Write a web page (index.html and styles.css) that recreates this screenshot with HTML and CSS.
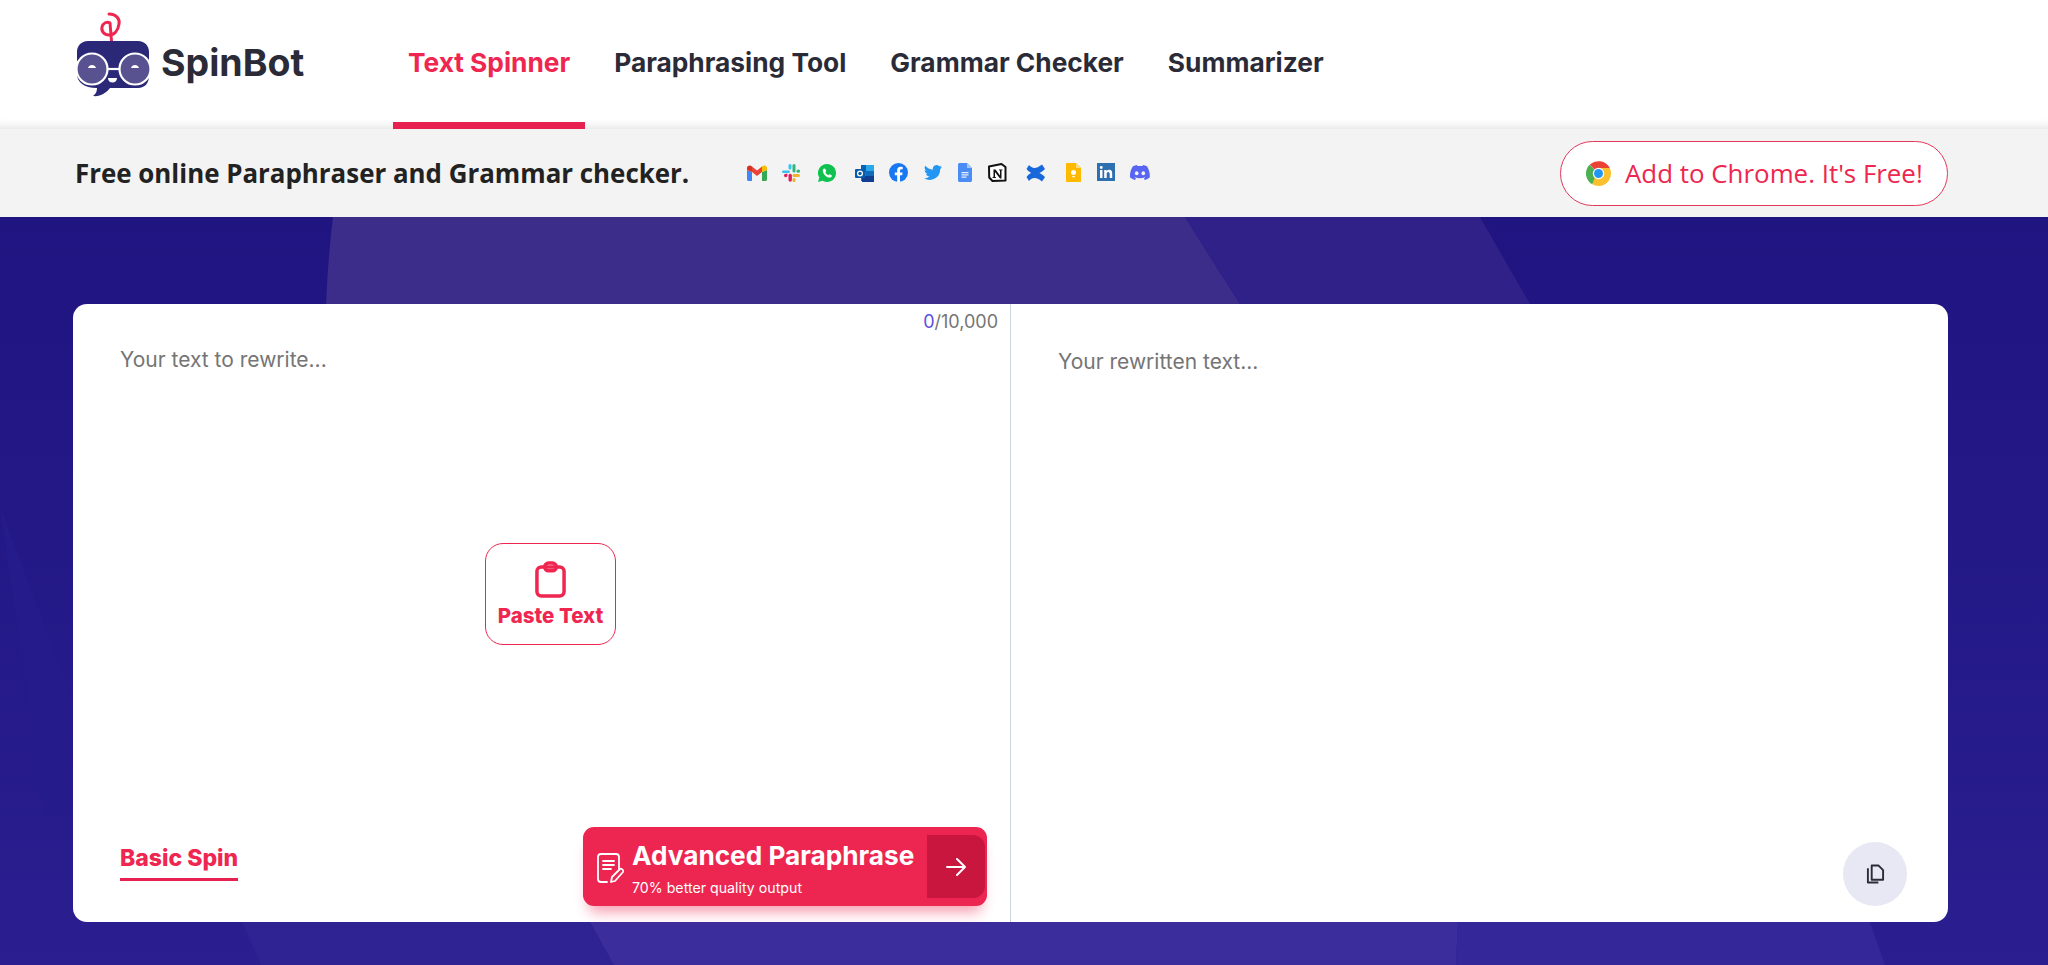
FILE: index.html
```html
<!DOCTYPE html>
<html lang="en">
<head>
    <meta charset="UTF-8">
    <meta name="viewport" content="width=device-width, initial-scale=1.0">
    <title>SpinBot</title>
    <link rel="stylesheet" href="styles.css">
</head>
<body>
    <header class="top-nav">
        <a class="logo">
            <svg class="logo-icon" viewBox="0 0 74 86" width="74" height="86">
                <path d="M36 35L34 11M33 2C41 2 44 8 43 12C42 19 38 23 33 23C28 23 25 19 26 15C27 11 31 9 34 11" fill="none" stroke="#ee2650" stroke-width="3" stroke-linecap="round"/>
                <path d="M12 29h50c7 0 11 5 11 11v24c0 7-4 12-11 12H34c-4 5-10 9-17 8 3-2 4-5 4-8C8 76 1 70 1 62V40c0-6 4-11 11-11z" fill="#2b2878"/>
                <circle cx="16" cy="57" r="15.500" fill="#585390" stroke="#fff" stroke-width="2.200"/>
                <circle cx="59" cy="57" r="15.500" fill="#585390" stroke="#fff" stroke-width="2.200"/>
                <path d="M31 57h13" stroke="#fff" stroke-width="2.200"/>
                <path d="M12 56c1-4 7-4 8 0zM55 56c1-4 7-4 8 0zM32 66h9c0 6-9 6-9 0z" fill="#fff"/>
            </svg>
            <span class="logo-text">SpinBot</span>
        </a>
        <nav class="nav-links">
            <a class="nav-link active">Text Spinner</a>
            <a class="nav-link">Paraphrasing Tool</a>
            <a class="nav-link">Grammar Checker</a>
            <a class="nav-link">Summarizer</a>
        </nav>
    </header>

    <div class="sub-bar">
        <p class="tagline">Free online Paraphraser and Grammar checker.</p>
        <div class="app-icons">
            <svg class="gmail" viewBox="0 0 20 16"><path d="M0 5v9.500c0 .8.700 1.500 1.500 1.500H5V7z" fill="#4285f4"/><path d="M15 7v9h3.500c.8 0 1.500-.7 1.500-1.500V5z" fill="#34a853"/><path d="M5 7V1.500L10 5.500l5-4V7l-5 4z" fill="#ea4335"/><path d="M0 5V3c0-2.500 3-3.500 5-1.500V7z" fill="#d93025"/><path d="M15 1.500C17 -.5 20 .5 20 3v2l-5 2z" fill="#fbbc04"/></svg>
            <svg class="slack" viewBox="0 0 18 18"><path d="M2 11.500a1.700 1.700 0 1 0 3.400 0v-1.700H3.700A1.700 1.700 0 0 0 2 11.500z" fill="#e01e5a"/><rect x="6.500" y="9.800" width="3.400" height="8" rx="1.700" fill="#e01e5a"/><rect x="0" y="6.500" width="8" height="2.400" rx="1.200" fill="#36c5f0"/><rect x="6.500" y="0" width="3" height="5.500" rx="1.500" fill="#36c5f0"/><rect x="10.500" y="0" width="3" height="8.500" rx="1.500" fill="#2eb67d"/><rect x="14.500" y="5.500" width="3.500" height="3.300" rx="1.600" fill="#2eb67d"/><rect x="10.500" y="10" width="7.500" height="3" rx="1.500" fill="#ecb22e"/><rect x="10.500" y="14" width="3" height="4" rx="1.500" fill="#ecb22e"/></svg>
            <svg class="whatsapp" viewBox="0 0 18 18"><path d="M9 0a9 9 0 0 0-7.700 13.600L0 18l4.500-1.200A9 9 0 1 0 9 0z" fill="#0fc14f"/><path d="M6.200 4.500c-.5 0-1.400.8-1.400 2.200 0 3 3.500 6.800 6.800 6.800 1.300 0 2.300-.9 2.300-1.800 0-.4-2-1.500-2.300-1.500-.4 0-.8 1-1.200 1-.9 0-3-2-3-2.900 0-.4.900-.8.900-1.200 0-.3-.9-2.600-2.100-2.600z" fill="#fff"/></svg>
            <svg class="outlook" viewBox="0 0 19 18"><path d="M6 1h10v16H6z" fill="#0f78d4"/><path d="M11 1h8v6h-8z" fill="#28a8ea"/><path d="M6 1h5v6H6z" fill="#0364b8"/><path d="M11 7h8v6h-8z" fill="#0f6cbd"/><path d="M7 12h12v6H7z" fill="#103f91"/><rect x="0" y="5" width="10" height="9" rx="1" fill="#0a5ca8"/><circle cx="5" cy="9.500" r="2.400" fill="none" stroke="#fff" stroke-width="1.300"/></svg>
            <svg class="facebook" viewBox="0 0 19 19"><circle cx="9.500" cy="9.500" r="9.500" fill="#1877f2"/><path d="M13.200 12.200l.4-2.700H11V7.800c0-.8.400-1.500 1.600-1.500h1.100V4c-1.800-.4-5.500-.6-5.500 3.400v2.100H5.800v2.700h2.400V19h2.800v-6.800z" fill="#fff"/></svg>
            <svg class="twitter" viewBox="0 0 18 15"><path d="M18 1.800c-.7.300-1.400.5-2.100.6.800-.5 1.300-1.200 1.600-2-.7.400-1.500.7-2.300.9A3.700 3.700 0 0 0 8.900 4.700 10.500 10.500 0 0 1 1.300.8a3.700 3.700 0 0 0 1.100 4.900c-.6 0-1.200-.2-1.700-.5 0 1.800 1.300 3.300 3 3.600-.5.200-1.100.2-1.700.1.500 1.500 1.900 2.500 3.500 2.600A7.400 7.400 0 0 1 0 13.100 10.400 10.400 0 0 0 16.200 4.300c.7-.7 1.300-1.500 1.800-2.500z" fill="#2196f3"/></svg>
            <svg class="docs" viewBox="0 0 14 19"><path d="M1.500 0H9l5 5v12.500c0 .8-.7 1.500-1.500 1.500h-11C.7 19 0 18.300 0 17.500v-16C0 .7.700 0 1.500 0z" fill="#4b8df5"/><path d="M9 0l5 5H9z" fill="#a6c5fa"/><path d="M3.500 9h7v1.200h-7zM3.500 11.300h7v1.200h-7zM3.500 13.600h5v1.200h-5z" fill="#e8f0fe"/></svg>
            <svg class="notion" viewBox="0 0 19 19"><path d="M1 3.500L13.500 1 17.500 4v13.500L4.500 18 1.200 14.500z" fill="#fff" stroke="#111" stroke-width="2" stroke-linejoin="round"/><path d="M5.500 6.500h2l4.500 6v-5l-1-.2v-.8h3.500v.8l-1 .2v8h-1.500L7 9v5l1 .2v.8H4.500v-.8l1-.2z" fill="#111"/></svg>
            <svg class="confluence" viewBox="0 0 19 18"><path d="M.5 5L3 1C6 4 9 6 16 .5L19 5C12 12 5 11 .5 5z" fill="#1868db"/><path d="M.5 13L3 17C6 14 9 12 16 17.500L19 13C12 6 5 7 .5 13z" fill="#1868db"/></svg>
            <svg class="keep" viewBox="0 0 15 19"><path d="M1 0h9l5 5v13c0 .6-.4 1-1 1H1c-.6 0-1-.4-1-1V1c0-.6.400-1 1-1z" fill="#ffba00"/><path d="M10 0l5 5h-5z" fill="#ffdd76"/><circle cx="7.500" cy="9.500" r="2.500" fill="#fff"/><path d="M6.300 13h2.400v1.200H6.300z" fill="#fff"/></svg>
            <svg class="linkedin" viewBox="0 0 19 19"><rect width="18" height="18" fill="#2e6fb0"/><path d="M3 7h2.500v8H3zM4.250 3a1.400 1.400 0 1 1 0 2.900 1.400 1.400 0 0 1 0-2.900zM7.200 7h2.400v1.200c.5-.8 1.300-1.400 2.600-1.400 2.300 0 3 1.500 3 3.800V15h-2.500v-4c0-1-.3-2-1.400-2-1.200 0-1.600 1-1.600 2v4H7.200z" fill="#fff"/></svg>
            <svg class="discord" viewBox="0 0 20 15"><path d="M17 1.300A16 16 0 0 0 13 0l-.5 1.100a15 15 0 0 0-5 0L7 0a16 16 0 0 0-4 1.300C.4 5.100-.3 8.900.100 12.600a16 16 0 0 0 4.900 2.400l1-1.600-1.500-.8.400-.3c3.200 1.400 6.800 1.400 10 0l.4.300-1.500.8 1 1.600a16 16 0 0 0 4.900-2.400c.5-4.300-.7-8-2.700-11.300z" fill="#5865f2"/><ellipse cx="6.700" cy="8.200" rx="1.800" ry="2" fill="#f3f3f3"/><ellipse cx="13.300" cy="8.200" rx="1.800" ry="2" fill="#f3f3f3"/></svg>
        </div>
        <a class="chrome-button">
            <svg class="chrome-icon" viewBox="0 0 24 24" width="25" height="25">
                <path d="M12 12L3.600 3.600A12 12 0 0 1 22.800 6.800H12z" fill="#ea4335"/>
                <path d="M12 12L6 22.400A12 12 0 0 1 3.300 3.700z" fill="#4caf50"/>
                <path d="M12 24a12 12 0 0 0 10.800-17.200H12l-6 15.600A12 12 0 0 0 12 24z" fill="#fbc02d"/>
                <circle cx="12" cy="12" r="5.500" fill="#fff"/>
                <circle cx="12" cy="12" r="4.300" fill="#2196f3"/>
            </svg>
            <span>Add to Chrome. It's Free!</span>
        </a>
    </div>

    <main class="hero">
        <svg class="hero-bg" viewBox="0 0 2048 748" preserveAspectRatio="none">
            <path d="M333 0H1185L1240 87H326Q328 40 333 0z" fill="#3c2d8b"/>
            <polygon points="1185,0 1480,0 1530,87 1240,87" fill="#2f2188"/>
            <polygon points="0,290 72,480 72,600 45,600" fill="#261b8a"/>
            <polygon points="242,705 590,705 614,748 261,748" fill="#2f2393"/>
            <polygon points="590,705 1458,705 1456,748 614,748" fill="#3b2e9c"/>
            <polygon points="1458,705 1870,705 1885,748 1456,748" fill="#33279a"/>
        </svg>
        <div class="editor-card">
            <section class="panel panel-left">
                <div class="counter"><span class="count-now">0</span>/10,000</div>
                <p class="placeholder">Your text to rewrite...</p>
                <button class="paste-button">
                    <svg viewBox="0 0 32 38" width="31" height="37" fill="none" stroke="#ee2650" stroke-width="3.600" stroke-linejoin="round">
                        <rect x="2" y="6" width="28" height="30" rx="4.500"/>
                        <rect x="10" y="2" width="12" height="8" rx="4"/>
                    </svg>
                    <span>Paste Text</span>
                </button>
                <div class="panel-footer">
                    <a class="basic-spin">Basic Spin</a>
                    <button class="advanced-button">
                        <svg class="doc-icon" viewBox="0 0 28 32" width="28" height="32" fill="none" stroke="#fff" stroke-width="1.800" stroke-linecap="round" stroke-linejoin="round">
                            <path d="M11 30H5c-2 0-3-1-3-3V5c0-2 1-3 3-3h15c2 0 3 1 3 3v12"/>
                            <path d="M7 9h11M7 13h11M7 17h8"/>
                            <path d="M15 30l1-5 8-8c1-1 4 1 3 3l-8 9z"/>
                        </svg>
                        <span class="advanced-text">
                            <strong>Advanced Paraphrase</strong>
                            <small>70% better quality output</small>
                        </span>
                        <span class="advanced-arrow">
                            <svg viewBox="0 0 20 20" width="20" height="20" fill="none" stroke="#fff" stroke-width="2" stroke-linecap="round" stroke-linejoin="round"><path d="M1 10h18M11 2l8 8-8 8"/></svg>
                        </span>
                    </button>
                </div>
            </section>
            <section class="panel panel-right">
                <p class="placeholder">Your rewritten text...</p>
                <button class="copy-button">
                    <svg viewBox="0 0 20 22" width="19" height="22" fill="none" stroke="#2b2b38" stroke-width="2" stroke-linejoin="round">
                        <path d="M6 2h7l5 5v10H6z"/>
                        <path d="M2 5v15h11"/>
                    </svg>
                </button>
            </section>
        </div>
    </main>
</body>
</html>
```
FILE: styles.css
```css
* {
    box-sizing: border-box;
}

html, body {
    height: 100%;
}

body {
    margin: 0;
    overflow: hidden;
    font-family: Inter, "Liberation Sans", sans-serif;
    background-color: #241a88;
}

/* top nav */
.top-nav {
    position: relative;
    z-index: 2;
    display: flex;
    height: 129px;
    padding-left: 76px;
    background-color: white;
    box-shadow: inset 0 -10px 10px -8px rgba(0, 0, 0, 0.12);
}

.logo {
    display: flex;
    align-items: flex-start;
    width: 317px;
    padding-top: 12px;
}

.logo-icon {
    flex-shrink: 0;
}

.logo-text {
    margin: 29px 0 0 11px;
    font-size: 37.500px;
    font-weight: 700;
    line-height: 44px;
    color: #2b2b38;
}

.nav-links {
    display: flex;
    gap: 14px;
}

.nav-link {
    padding: 46px 15px 0;
    font-size: 26.300px;
    font-weight: 700;
    line-height: 34px;
    color: #2b2b38;
}

.nav-link.active {
    color: #ee2650;
    border-bottom: 7px solid #e6214f;
}

/* sub bar */
.sub-bar {
    display: flex;
    align-items: center;
    height: 88px;
    padding: 0 100px 0 75px;
    background-color: #f3f3f3;
}

.tagline {
    width: 672px;
    margin: 0;
    font-family: "Open Sans", sans-serif;
    font-size: 25.900px;
    font-weight: 700;
    color: #222;
}

.app-icons {
    display: flex;
    align-items: center;
    height: 24px;
    margin-top: -1px;
}

.gmail { width: 20px; height: 16px; margin-right: 15px; }
.slack { width: 18px; height: 18px; margin-right: 18px; }
.whatsapp { width: 18px; height: 18px; margin-right: 19px; }
.outlook { width: 19px; height: 18px; margin-right: 15px; }
.facebook { width: 19px; height: 19px; margin-right: 16px; }
.twitter { width: 18px; height: 15px; margin-right: 16px; }
.docs { width: 14px; height: 19px; margin-right: 16px; }
.notion { width: 19px; height: 19px; margin-right: 19px; }
.confluence { width: 19px; height: 18px; margin-right: 21px; }
.keep { width: 15px; height: 19px; margin-right: 16px; }
.linkedin { width: 19px; height: 19px; margin-right: 14px; }
.discord { width: 20px; height: 15px; }

.chrome-button {
    display: flex;
    align-items: center;
    gap: 14px;
    width: 388px;
    height: 65px;
    margin-left: auto;
    padding-left: 25px;
    font-family: "Open Sans", sans-serif;
    font-size: 25.900px;
    color: #ee2650;
    background-color: white;
    border: 1.500px solid #e2385c;
    border-radius: 33px;
}

/* main area */
.hero {
    position: relative;
    height: 748px;
    padding: 87px 100px 0 73px;
    background: linear-gradient(180deg, #1f1480 0%, #2a1e90 100%);
}

.hero-bg {
    position: absolute;
    top: 0;
    left: 0;
    width: 100%;
    height: 100%;
}

.editor-card {
    position: relative;
    display: flex;
    height: 618px;
    background-color: white;
    border-radius: 14px;
}

.panel {
    position: relative;
    display: flex;
    flex-direction: column;
}

.panel-left {
    width: 938px;
    border-right: 1px solid #cfd3de;
}

.panel-right {
    flex: 1;
}

.placeholder {
    margin: 0;
    font-size: 21px;
    line-height: 28px;
    color: #757575;
}

.panel-left .placeholder {
    padding: 42px 0 0 47px;
}

.panel-right .placeholder {
    padding: 44px 0 0 47px;
}

.counter {
    position: absolute;
    top: 6px;
    right: 12px;
    font-size: 18px;
    line-height: 24px;
    color: #757575;
}

.count-now {
    color: #5b4fe0;
}

.paste-button {
    position: absolute;
    top: 239px;
    left: 412px;
    display: flex;
    flex-direction: column;
    align-items: center;
    width: 131px;
    height: 102px;
    padding: 17px 0 0;
    font-family: Inter, sans-serif;
    font-size: 20.500px;
    font-weight: 800;
    line-height: 24px;
    color: #ee2650;
    background-color: white;
    border: 1.500px solid #ee2650;
    border-radius: 18px;
}

.paste-button span {
    margin-top: 6px;
    white-space: nowrap;
}

.panel-footer {
    display: flex;
    align-items: flex-start;
    justify-content: space-between;
    margin-top: auto;
    padding: 0 23px 16px 47px;
}

.basic-spin {
    margin-top: 17px;
    padding-bottom: 6px;
    font-size: 23px;
    font-weight: 800;
    line-height: 28px;
    color: #ee2650;
    border-bottom: 3px solid #e6214f;
}

.advanced-button {
    display: flex;
    align-items: center;
    width: 404px;
    height: 79px;
    padding: 0 2px 0 13px;
    font-family: Inter, sans-serif;
    text-align: left;
    color: white;
    background-color: #ec2650;
    border: none;
    border-radius: 11px;
    box-shadow: 0 12px 14px -6px rgba(238, 38, 80, 0.45);
}

.doc-icon {
    flex-shrink: 0;
    margin-top: 2px;
}

.advanced-text {
    display: flex;
    flex-direction: column;
    flex: 1;
    margin-left: 8px;
    padding-top: 4px;
}

.advanced-text strong {
    font-size: 26.200px;
    font-weight: 700;
    line-height: 32px;
    white-space: nowrap;
}

.advanced-text small {
    margin-top: 7px;
    font-size: 14.200px;
    line-height: 18px;
}

.advanced-arrow {
    display: flex;
    align-items: center;
    justify-content: center;
    width: 58px;
    height: 63px;
    background-color: #c9163f;
    border-radius: 0 12px 12px 0;
}

.copy-button {
    position: absolute;
    right: 41px;
    bottom: 16px;
    display: flex;
    align-items: center;
    justify-content: center;
    width: 64px;
    height: 64px;
    padding: 0;
    background-color: #e8e8f4;
    border: none;
    border-radius: 50%;
}
```
